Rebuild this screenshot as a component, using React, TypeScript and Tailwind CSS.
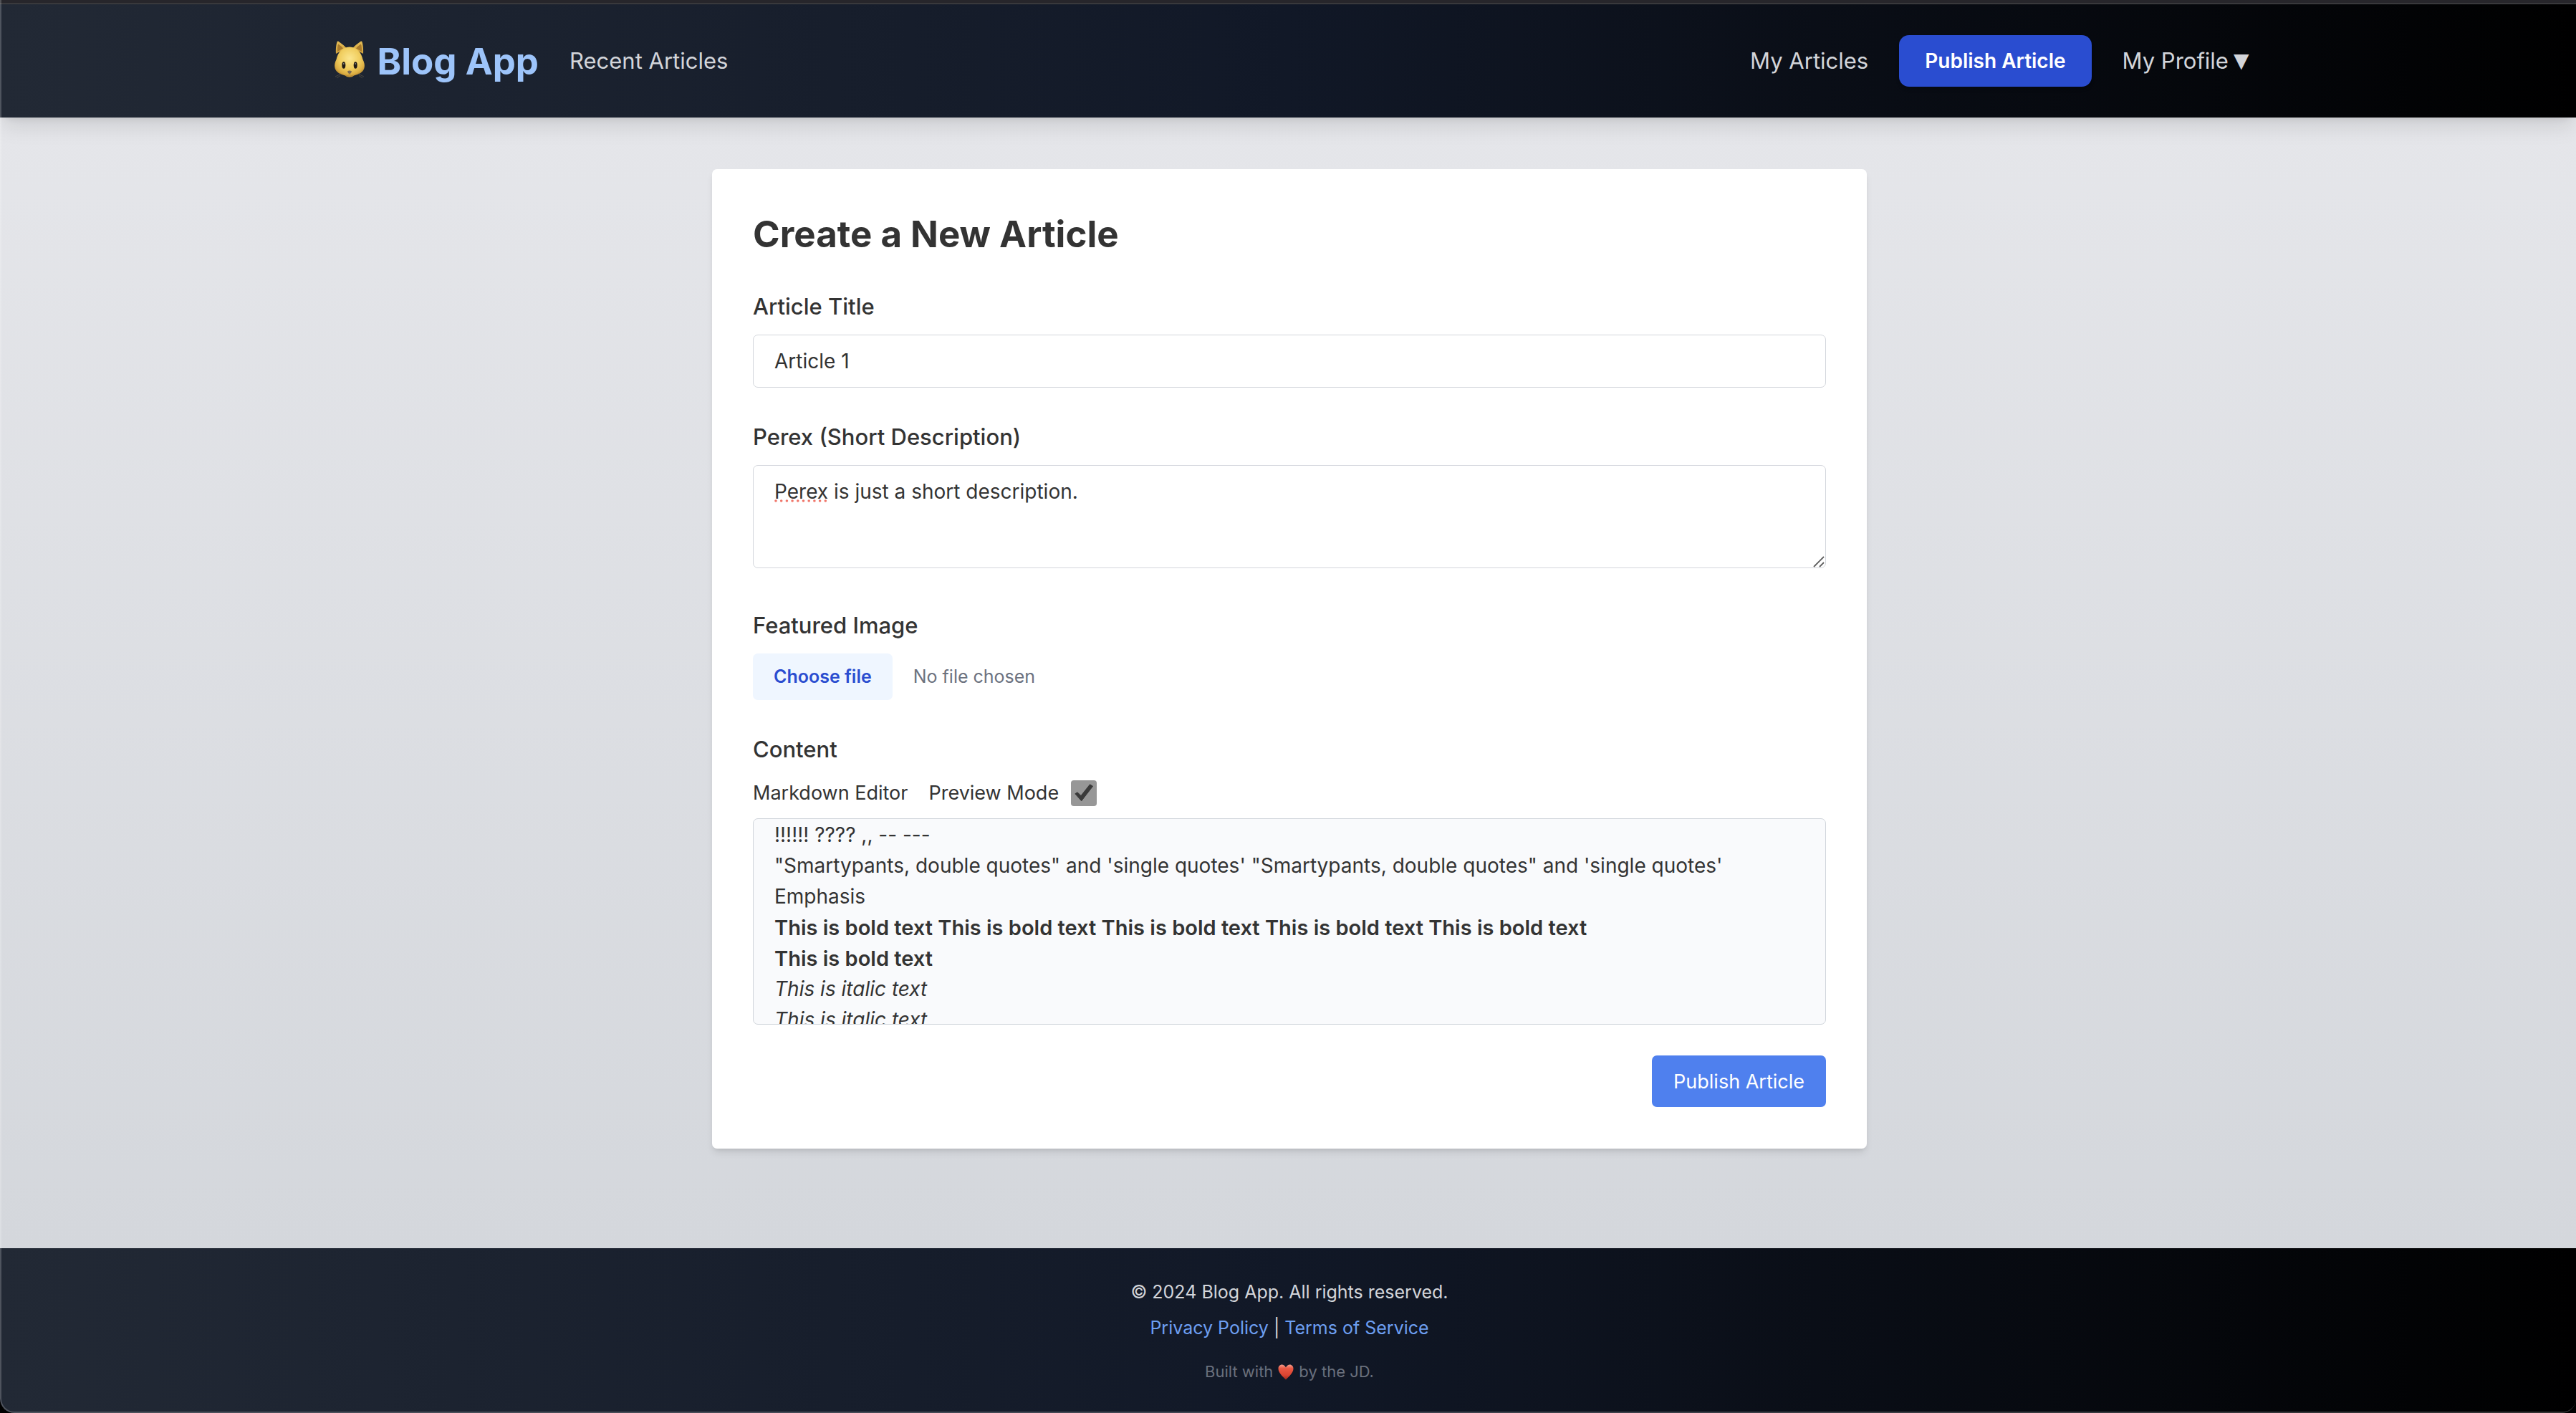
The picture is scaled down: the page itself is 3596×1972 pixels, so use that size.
import { useState } from "react";

function CatIcon() {
  return (
    <svg className="h-[58px] w-[44px] shrink-0" viewBox="0 0 44 58" aria-hidden="true">
      <defs>
        <radialGradient id="catFace" cx="0.5" cy="0.38" r="0.62">
          <stop offset="0" stopColor="#fbe68f" />
          <stop offset="0.55" stopColor="#f0cd5e" />
          <stop offset="0.85" stopColor="#dcae43" />
          <stop offset="1" stopColor="#b98a2f" />
        </radialGradient>
        <linearGradient id="catEar" x1="0" y1="0" x2="0" y2="1">
          <stop offset="0" stopColor="#e3bb55" />
          <stop offset="1" stopColor="#d3a33d" />
        </linearGradient>
      </defs>
      <path d="M3 19C2.500 12 3.500 5 4.500 2.500C5 1 6.500 1.500 7.500 2.500C11 5 15 8 17.500 11Z" fill="url(#catEar)" />
      <path d="M41 19C41.500 12 40.500 5 39.500 2.500C39 1 37.500 1.500 36.500 2.500C33 5 29 8 26.500 11Z" fill="url(#catEar)" />
      <path d="M5 16C4.800 11 5.300 7.500 6.200 5.500C9 7.500 11.500 9.500 13 11.500Z" fill="#a87a2b" />
      <path d="M39 16C39.200 11 38.700 7.500 37.800 5.500C35 7.500 32.500 9.500 31 11.500Z" fill="#a87a2b" />
      <path d="M22 9.500C33 9.500 38.500 18 40.500 27C42.500 31 43.500 35 42.500 39C41 45 34.500 48 28 49.500C25 52.500 19 52.500 16 49.500C9.500 48 3 45 1.500 39C0.500 35 1.500 31 3.500 27C5.500 18 11 9.500 22 9.500Z" fill="url(#catFace)" />
      <ellipse cx="13.800" cy="35" rx="2.500" ry="4.700" fill="#1f1a16" />
      <ellipse cx="30.200" cy="35" rx="2.500" ry="4.700" fill="#1f1a16" />
      <circle cx="13.800" cy="33" r="0.900" fill="#8d8a86" />
      <circle cx="30.200" cy="33" r="0.900" fill="#8d8a86" />
      <path d="M19 43.500Q22 41.500 25 43.500Q24.500 46.500 22 47.200Q19.500 46.500 19 43.500Z" fill="#7c6b54" />
      <path d="M16 49Q20 50.500 22 48Q24 50.500 28 49" fill="none" stroke="#b88a35" strokeWidth="1" />
      <path d="M10 47L2 51M9 49.500L4 53M34 47L42 51M35 49.500L40 53" stroke="#5b5648" strokeWidth="0.700" />
    </svg>
  );
}

function HeartIcon() {
  return (
    <svg className="h-[22px] w-[22px] shrink-0" viewBox="0 0 22 22" aria-hidden="true">
      <defs>
        <linearGradient id="heartFill" x1="0" y1="0" x2="0" y2="1">
          <stop offset="0" stopColor="#f3a08f" />
          <stop offset="0.25" stopColor="#ea5843" />
          <stop offset="0.7" stopColor="#dc4431" />
          <stop offset="1" stopColor="#9c2a1c" />
        </linearGradient>
      </defs>
      <path d="M11 4.500C9.500 1.500 7.500 0.500 5.600 0.500C2.700 0.500 0.500 2.800 0.500 6C0.500 12 6.500 17 11 21.500C15.500 17 21.500 12 21.500 6C21.500 2.800 19.300 0.500 16.400 0.500C14.500 0.500 12.500 1.500 11 4.500Z" fill="url(#heartFill)" />
    </svg>
  );
}

function Header() {
  return (
    <header className="relative z-10 bg-linear-to-r/srgb from-[#222935] via-[#111827] to-black pl-1 shadow-[0_18px_27px_-5px_rgba(0,0,0,0.1),0_7px_11px_-7px_rgba(0,0,0,0.1)]">
      <nav className="mx-auto flex max-w-[2765px] items-center justify-between p-[43px] text-[31px] leading-[50px] text-[#d3d5da]">
        <div className="flex items-center gap-[43px]">
          <a href="#" className="flex h-[72px] items-center gap-[17px] pl-[5px] text-[51px] leading-[65px] font-bold text-[#9dc4fa]">
            <CatIcon />
            <span>Blog App</span>
          </a>
          <a href="#">Recent Articles</a>
        </div>
        <div className="flex items-center gap-[43px]">
          <a href="#">My Articles</a>
          <button type="button" className="h-[72px] rounded-[14px] bg-[#2a4dd0] px-[36px] text-[28px] leading-[43px] font-semibold text-white shadow-md">
            Publish Article
          </button>
          <button type="button" className="flex items-center gap-[7px]">
            <span>My Profile</span>
            <span className="font-['DejaVu_Sans'] text-[28px]">▼</span>
          </button>
        </div>
      </nav>
    </header>
  );
}

const labelClass = "mb-[14px] block text-[31px] leading-[51px] font-medium";
const fieldClass = "block w-full rounded-[7px] border border-[#d3d6dc] bg-white px-[29px] py-[14px] text-[28px] leading-[44px]";

function ArticleForm() {
  const [preview, setPreview] = useState(true);
  return (
    <form className="mx-auto max-w-[1612px] rounded-[7px] bg-white px-[57px] py-[58px] text-[#333333] shadow-[0_7px_11px_-2px_rgba(0,0,0,0.1),0_4px_7px_-4px_rgba(0,0,0,0.1)]">
      <h1 className="mb-[43px] text-[51px] leading-[65px] font-bold">Create a New Article</h1>

      <div className="mb-[43px]">
        <label htmlFor="title" className={labelClass}>Article Title</label>
        <input id="title" type="text" defaultValue="Article 1" className={fieldClass} />
      </div>

      <div className="mb-[54px]">
        <label htmlFor="perex" className={labelClass}>Perex (Short Description)</label>
        <div className="relative">
          <textarea id="perex" spellCheck={false} defaultValue="Perex is just a short description." className={`${fieldClass} h-[144px] resize-none`} />
          <svg className="absolute top-[48px] left-[30px] h-[4px] w-[74px]" viewBox="0 0 74 4" aria-hidden="true">
            <path d="M2 2H74" stroke="#f0776b" strokeWidth="3.600" strokeLinecap="round" strokeDasharray="0 7.700" />
          </svg>
          <svg className="absolute right-[2px] bottom-[1px] h-[16px] w-[16px]" viewBox="0 0 16 16" aria-hidden="true">
            <path d="M1 15L15 1M9 15L15 9" stroke="#5f5f5f" strokeWidth="1.800" />
          </svg>
        </div>
      </div>

      <div className="mb-[43px]">
        <label htmlFor="image" className={labelClass}>Featured Image</label>
        <div className="flex items-center gap-[29px] text-[25px] leading-[37px]">
          <label htmlFor="image" className="rounded-[7px] bg-[#eff6ff] px-[29px] py-[14px] font-semibold text-[#2a4dd0]">Choose file</label>
          <input id="image" type="file" className="sr-only" />
          <span className="text-[#6c727f]">No file chosen</span>
        </div>
      </div>

      <div className="mb-[43px]">
        <h2 className={labelClass}>Content</h2>
        <div className="mb-[14px] flex items-center gap-[29px] text-[27px] leading-[43px]">
          <span>Markdown Editor</span>
          <label className="flex items-center gap-[17px]">
            <span>Preview Mode</span>
            <span className="relative flex">
              <input
                type="checkbox"
                checked={preview}
                onChange={(e) => setPreview(e.target.checked)}
                className="h-[36px] w-[36px] appearance-none rounded-[4px] bg-[#979797]"
              />
              {preview && (
                <svg className="pointer-events-none absolute inset-0 h-[36px] w-[36px]" viewBox="0 0 36 36" aria-hidden="true">
                  <path d="M5.800 18.800L9 16.800L14 21.500L26.500 5.800L30.500 8.300L14.700 28.800Z" fill="#3a3a3a" stroke="#3a3a3a" strokeWidth="1" strokeLinejoin="round" />
                </svg>
              )}
            </span>
          </label>
        </div>
        <div className="h-[288px] overflow-hidden rounded-[7px] border border-[#d0d5db] bg-[#f9fafc] px-[29px] pt-px text-[28px] leading-[43px]">
          <p>!!!!!! ???? ,, -- ---</p>
          <p>"Smartypants, double quotes" and 'single quotes' "Smartypants, double quotes" and 'single quotes'</p>
          <p>Emphasis</p>
          <p className="text-[29px] leading-[43px] font-semibold">This is bold text This is bold text This is bold text This is bold text This is bold text</p>
          <p className="text-[29px] leading-[43px] font-semibold">This is bold text</p>
          <p className="italic">This is italic text</p>
          <p className="italic">This is italic text</p>
        </div>
      </div>

      <div className="flex justify-end">
        <button type="submit" className="h-[72px] rounded-[7px] bg-[#4f80ee] px-[30px] text-[27px] leading-[43px] text-white">
          Publish Article
        </button>
      </div>
    </form>
  );
}

function Footer() {
  return (
    <footer className="bg-linear-to-r/srgb from-[#222935] via-[#111827] to-black py-[43px] pl-1 text-center text-[25px] leading-[36px] text-[#d3d5da]">
      <p>© 2024 Blog App. All rights reserved.</p>
      <p className="mt-[14px]">
        <a href="#" className="text-[#6d9ff2]">Privacy Policy</a> | <a href="#" className="text-[#6d9ff2]">Terms of Service</a>
      </p>
      <p className="mt-[29px] flex items-center justify-center gap-[7px] text-[22px] leading-[29px] text-[#6a707d]">
        <span>Built with</span>
        <HeartIcon />
        <span>by the JD.</span>
      </p>
    </footer>
  );
}

export default function App() {
  return (
    <div className="min-h-screen overflow-hidden bg-black font-['Inter',sans-serif]">
      <div className="relative flex min-h-screen flex-col overflow-hidden rounded-b-[20px]">
        <div className="h-[6px] border-b-2 border-[#3a3a3d] bg-[#27262b]" />
        <Header />
        <main className="flex-1 bg-linear-to-b/srgb from-[#e5e6ea] to-[#d4d7dc] pt-[72px] pb-[72px] pl-1">
          <ArticleForm />
        </main>
        <Footer />
        <div className="pointer-events-none absolute inset-y-0 right-[-2px] left-0 z-20 rounded-b-[20px] border-x-2 border-b-2 border-white/20" />
      </div>
    </div>
  );
}
